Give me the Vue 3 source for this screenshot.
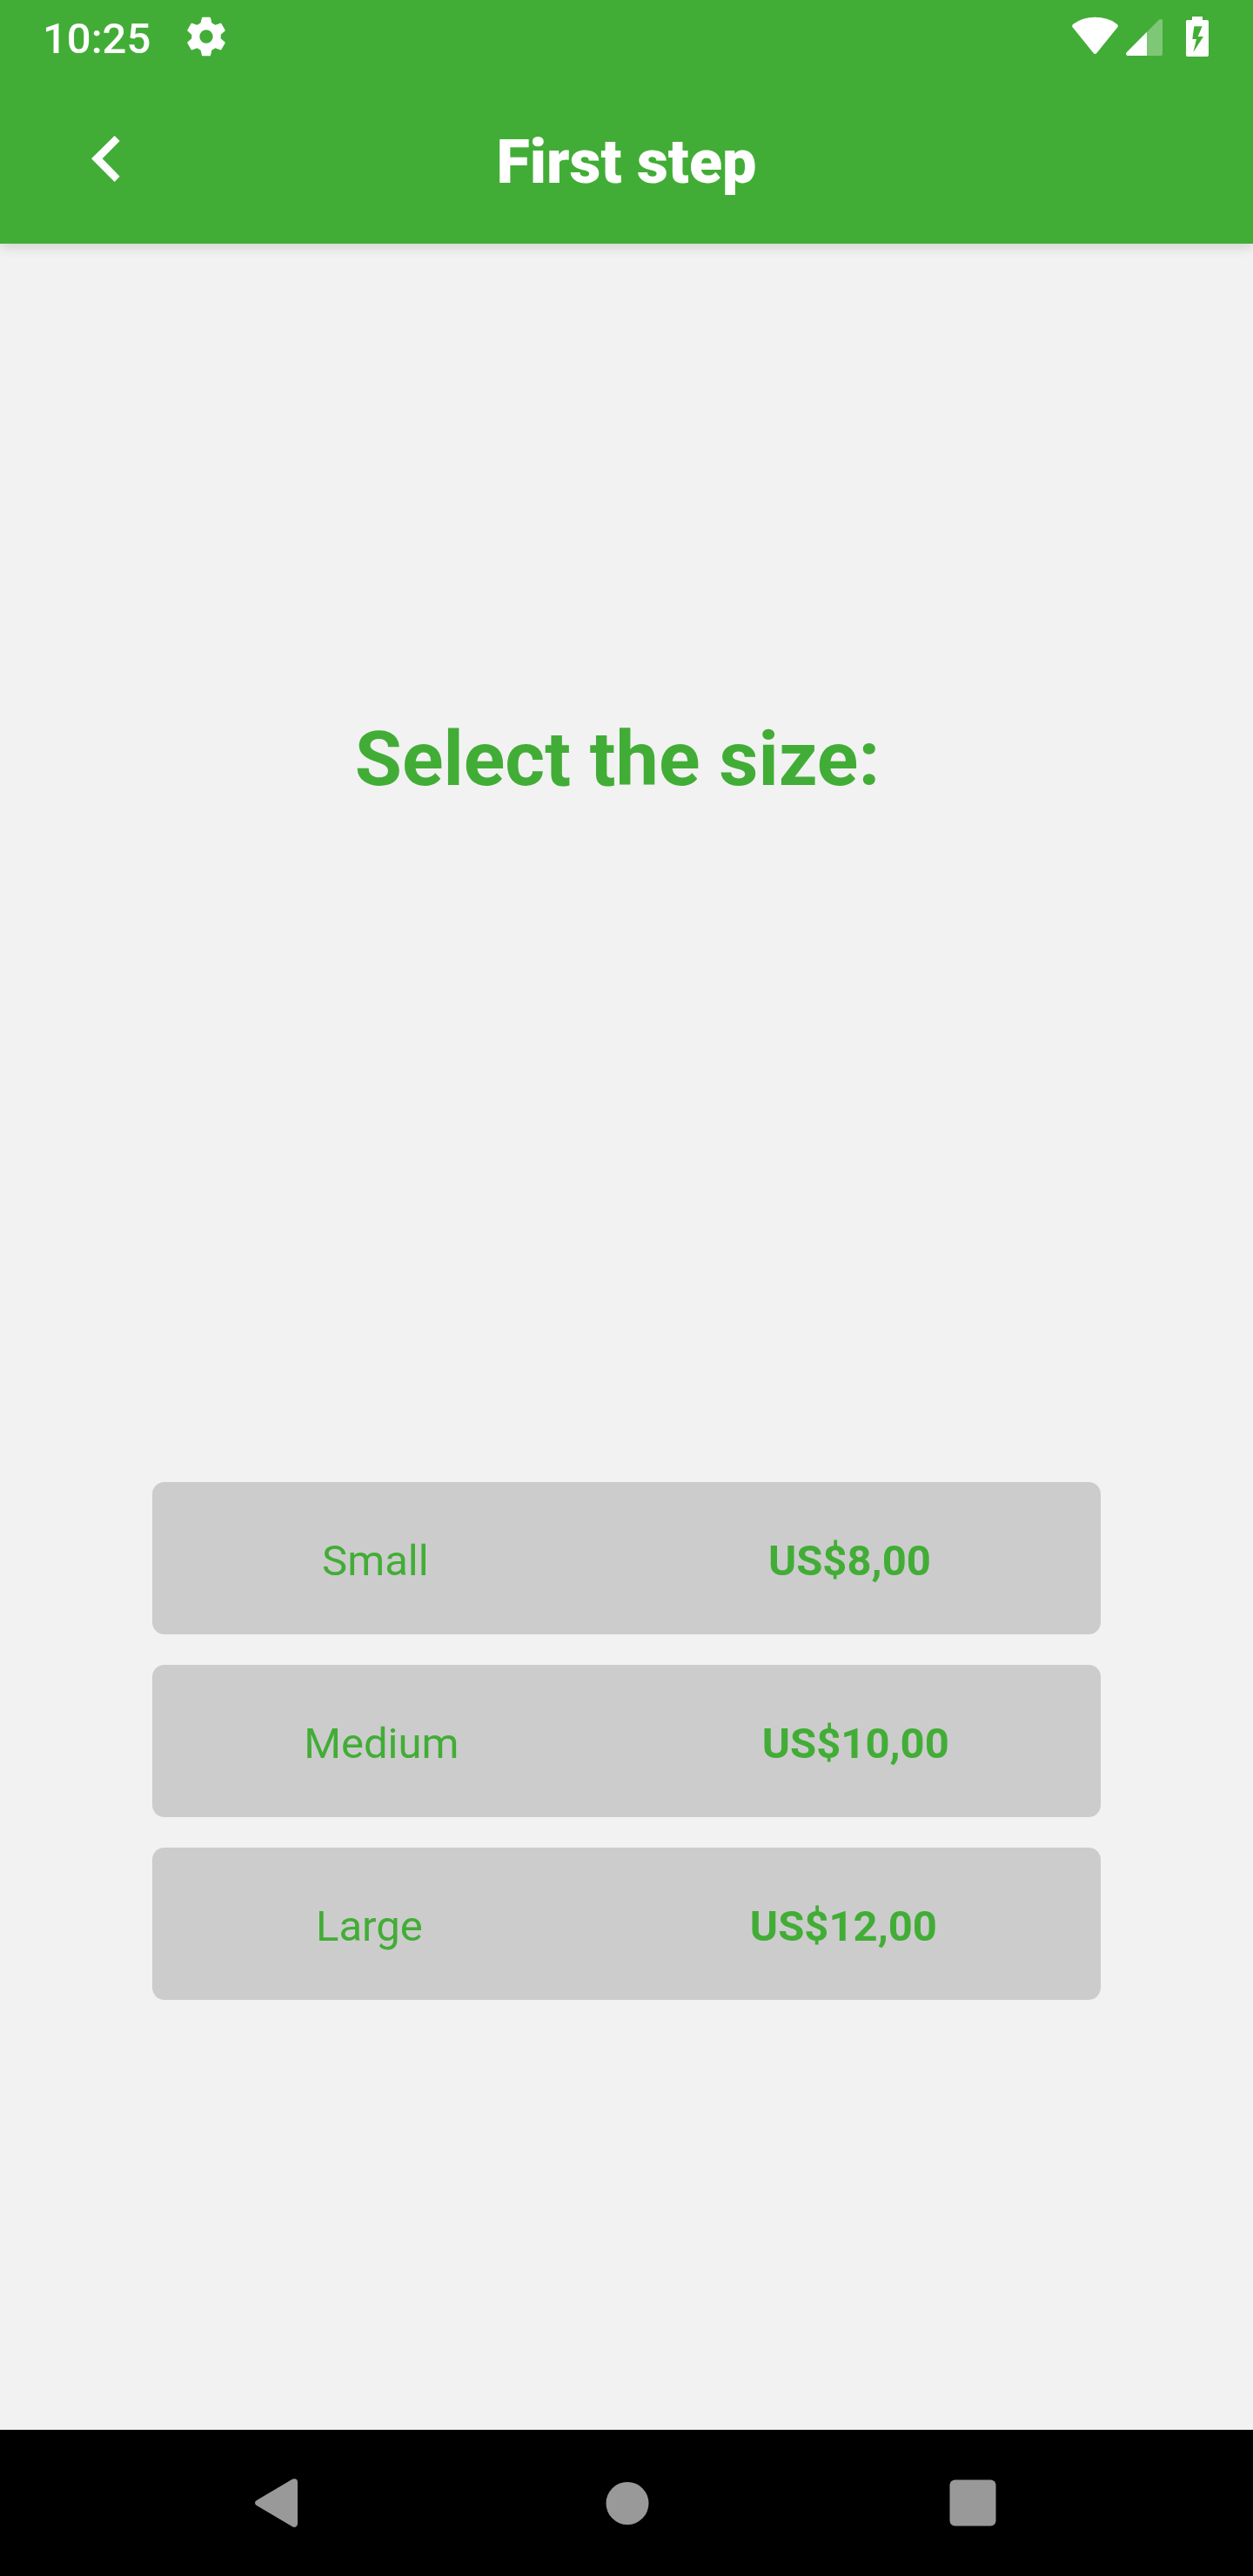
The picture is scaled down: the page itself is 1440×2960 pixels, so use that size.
<script setup>
const sizes = [
  { name: 'Small', price: 'US$8,00' },
  { name: 'Medium', price: 'US$10,00' },
  { name: 'Large', price: 'US$12,00' },
]
</script>

<template>
  <div class="screen">
    <header class="top">
      <div class="status">
        <span class="clock">10:25</span>
        <svg class="gear" viewBox="-69 -69 138 138" width="46" height="46">
          <path fill-rule="evenodd" d="M-19-47L-15-65Q-14.500-67-12-67H12Q14.500-67 15-65L19-47L31.200-40L48-46Q50.500-47 52-45L64.500-23Q65.500-20.500 64-19L50.200-7V7L64 19Q65.500 20.500 64.500 23L52 45Q50.500 47 48 46L31.200 40L19 47L15 65Q14.500 67 12 67H-12Q-14.500 67-15 65L-19 47L-31.200 40L-48 46Q-50.500 47-52 45L-64.500 23Q-65.500 20.500-64 19L-50.200 7V-7L-64-19Q-65.500-20.500-64.500-23L-52-45Q-50.500-47-48-46L-31.200-40ZM0-23A23 23 0 1 0 0 23A23 23 0 1 0 0-23Z" />
        </svg>
        <div class="indicators">
          <svg class="wifi" viewBox="66 57 159 132" width="53" height="44">
            <path d="M68 94Q64 88 70 83Q102 59 145.500 59T221 83Q227 88 223 94L151 183Q145.500 189 140 183Z" />
          </svg>
          <svg class="signal" viewBox="252 63 126 129" width="42" height="43">
            <path d="M324 110L366 68Q370 65 374 66Q378 68 378 72V186Q378 192 372 192H324Z" opacity=".32" />
            <path d="M324 110V192H258Q252 191 252 186Q252 183 254 181Z" />
          </svg>
          <svg class="battery" viewBox="459 57 78 138" width="26" height="46">
            <path fill-rule="evenodd" d="M480 57H516V69H532Q537 69 537 74V190Q537 195 532 195H464Q459 195 459 190V74Q459 69 464 69H480ZM487 91L481 135H495L484 180L519 126H500L515 91Z" />
          </svg>
        </div>
      </div>
      <div class="bar">
        <svg class="back" viewBox="75 78 99 159" width="33" height="53">
          <path d="M155 78L173 96L113 157L173 218L155 237L75 157Z" />
        </svg>
        <h1>First step</h1>
      </div>
    </header>

    <main>
      <h2>Select the size:</h2>
      <div class="list">
        <button v-for="s in sizes" :key="s.name" class="option">
          <span>{{ s.name }}</span>
          <strong>{{ s.price }}</strong>
        </button>
      </div>
    </main>

    <nav>
      <svg width="50" height="56" viewBox="0 0 50 56"><path d="M43 .8Q45 -.4 47 .6Q49 1.500 49 4V52Q49 54.500 47 55.500Q45 56.500 43 55.200L2 31Q0 30 0 28T2 25Z" /></svg>
      <svg class="home" width="50" height="50" viewBox="0 0 50 50"><circle cx="25" cy="25.500" r="24.500" /></svg>
      <svg width="54" height="54" viewBox="0 0 54 54"><rect x=".5" y=".5" width="53" height="53" rx="6" /></svg>
    </nav>
  </div>
</template>

<style>
body {
  margin: 0;
}
</style>

<style scoped>
.screen {
  width: 1440px;
  height: 2960px;
  display: flex;
  flex-direction: column;
  background: #f2f2f2;
  color: #42ad36;
  font-family: Roboto, sans-serif;
}
svg {
  display: block;
  flex: none;
}
.top {
  height: 280px;
  flex: none;
  background: #42ad36;
  color: #fff;
  fill: #fff;
  box-shadow: 0 3px 14px rgba(0, 0, 0, 0.15);
}
.status {
  height: 84px;
  box-sizing: border-box;
  padding: 19px 51px 0 49px;
  display: flex;
  align-items: flex-start;
}
.clock {
  width: 165px;
  font-size: 49px;
  line-height: 51px;
  font-weight: 500;
}
.indicators {
  margin-left: auto;
  display: flex;
}
.signal {
  margin: 2px 27px 0 9px;
}
.bar {
  height: 196px;
  box-sizing: border-box;
  padding: 0 105px;
  display: grid;
  grid-template-columns: 33px 1fr 33px;
  align-items: center;
}
.back {
  margin-top: 1px;
}
h1 {
  margin: 8px 0 0;
  text-align: center;
  font-size: 70px;
  line-height: 82px;
  font-weight: 900;
}
main {
  flex: 1;
  padding: 541px 175px 0;
}
h2 {
  margin: 0 0 0 -21px;
  height: 882px;
  text-align: center;
  font-size: 88px;
  line-height: 102px;
  font-weight: 700;
}
.list {
  display: flex;
  flex-direction: column;
  gap: 35px;
}
.option {
  height: 175px;
  padding: 6px 0 0;
  border: 0;
  border-radius: 14px;
  background: #ccc;
  color: inherit;
  font: 400 49px/58px Roboto, sans-serif;
  display: flex;
  align-items: center;
  justify-content: space-around;
}
.option strong {
  font-weight: 700;
}
nav {
  height: 168px;
  flex: none;
  box-sizing: border-box;
  padding: 0 295px 0 293px;
  background: #000;
  fill: #999;
  display: flex;
  align-items: center;
  justify-content: space-between;
}
.home {
  margin-left: 7px;
}
</style>
